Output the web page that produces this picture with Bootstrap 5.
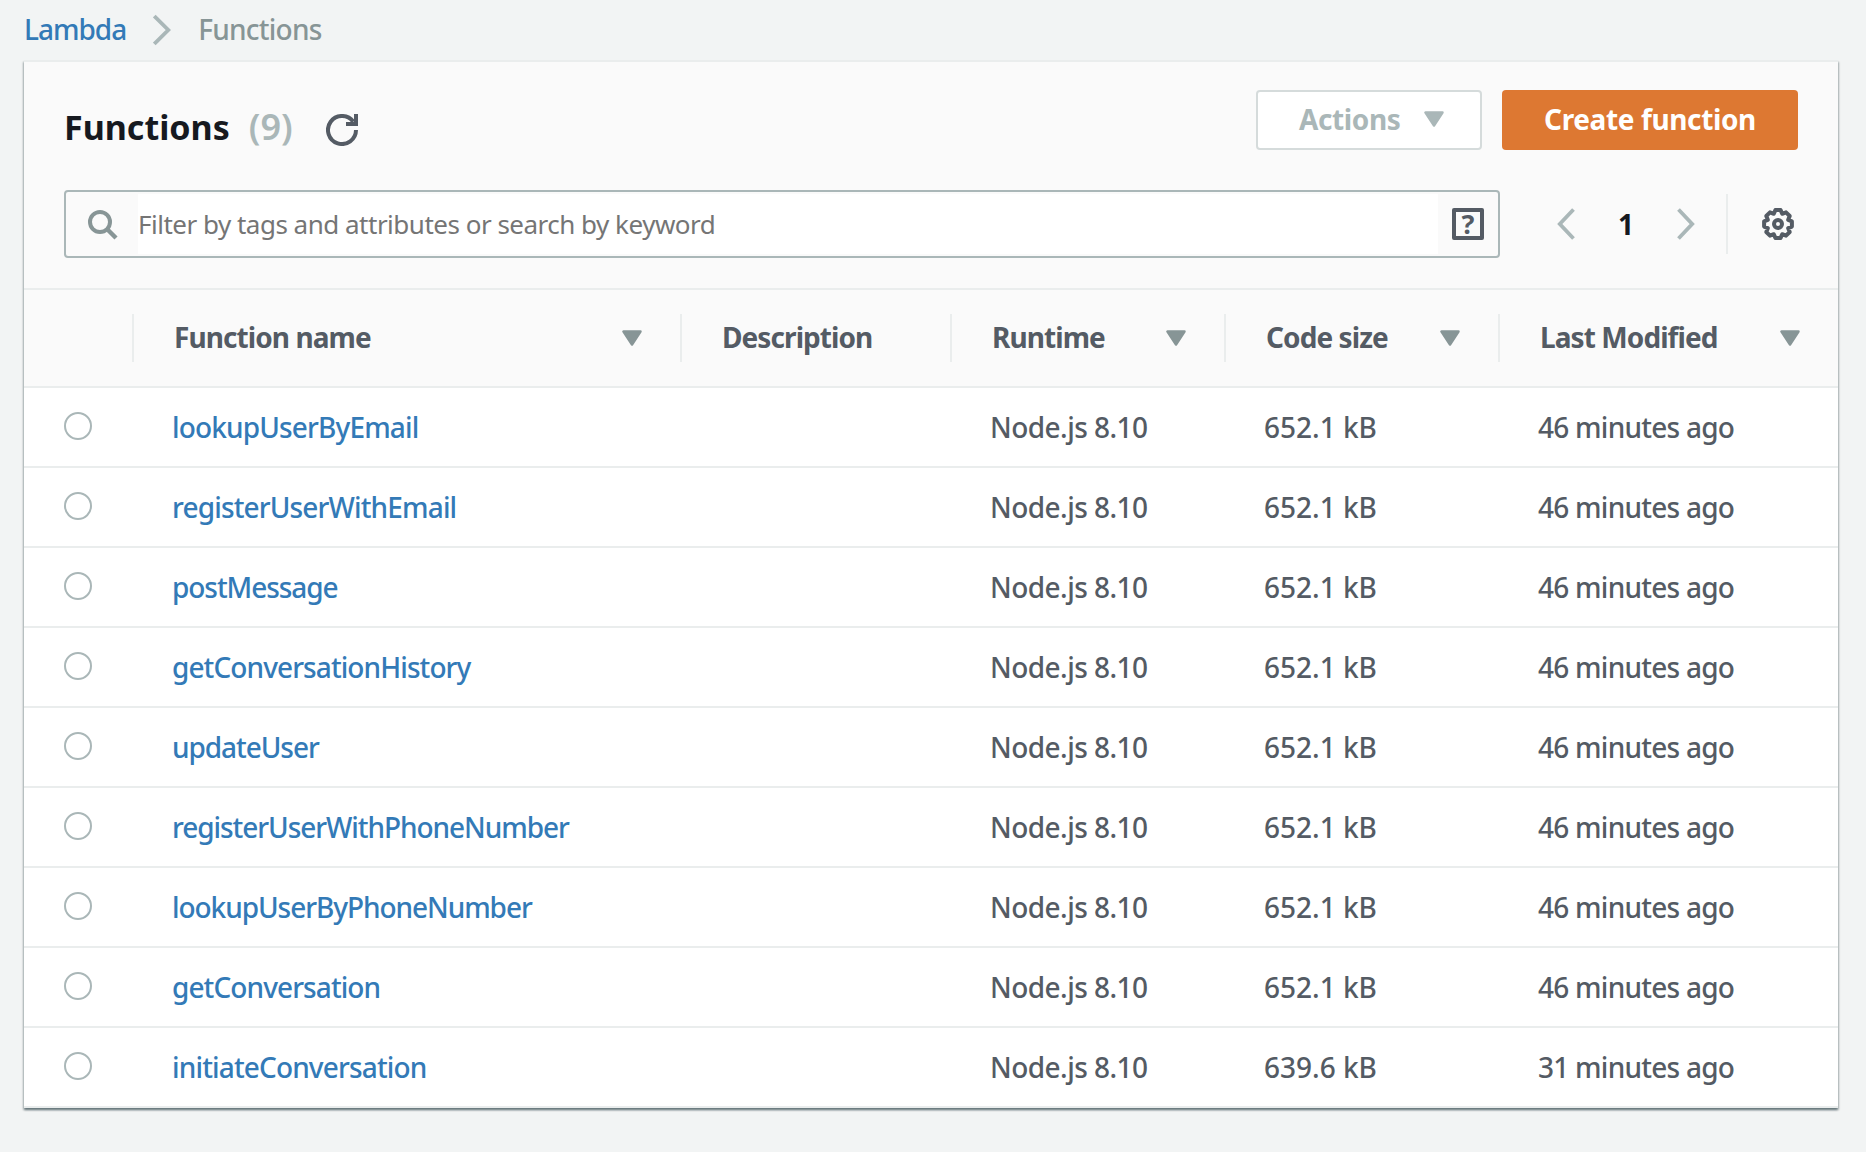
<!DOCTYPE html>
<html lang="en">
<head>
<meta charset="utf-8">
<meta name="viewport" content="width=device-width, initial-scale=1">
<title>Lambda Functions</title>
<link href="https://cdn.jsdelivr.net/npm/bootstrap@5.3.0/dist/css/bootstrap.min.css" rel="stylesheet">
<style>
  body { background: #f2f4f4; font-family: "Noto Sans", "Open Sans", sans-serif; font-size: 28px; font-weight: 500; color: #545b64; line-height: 1.4; }
  a { color: #337ab7; text-decoration: none; }
  svg { display: block; flex: none; }

  .crumbs { height: 60px; padding: 0 24px; color: #879596; }
  .crumb-home { letter-spacing: -1px; }
  .crumb-here { letter-spacing: -.76px; }
  .crumb-sep { margin: 0 27px 0 27px; }

  .panel { width: 1814px; margin-left: 24px; background: #fff; border-top: 2px solid #eaeded;
    box-shadow: 0 2px 2px 0 rgba(0,28,36,.35), 1px 2px 2px 0 rgba(0,28,36,.2), -1px 2px 2px 0 rgba(0,28,36,.2); }
  .panel-head { background: #fafafa; padding: 28px 40px 30px; border-bottom: 2px solid #eaeded; }
  .panel-title { font-size: 34px; font-weight: 700; color: #16191f; letter-spacing: 0; margin: 0; line-height: 60px; }
  .title-row { padding-top: 13px; height: 60px; }
  .title-count { font-size: 36px; font-weight: 600; color: #aab7b8; margin-left: 19px; line-height: 60px; }
  .reload { margin: 7px 0 0 33px; }

  .btn-act, .btn-make { height: 60px; border-radius: 4px; font-size: 28px; font-weight: 700; line-height: 1; padding: 0; padding-bottom: 2px; }
  .btn-act { width: 226px; background: #fff; border: 2px solid #d5dbdb; color: #aab7b8; letter-spacing: -.38px; padding-left: 41px; padding-right: 36px; }
  .btn-make { width: 296px; background: #dd7832; border: 0; color: #fff; letter-spacing: -.38px; }
  .btn-make:hover { background: #c9671f; color: #fff; }

  .tools { margin-top: 40px; height: 68px; }
  .search { width: 1436px; height: 68px; border: 2px solid #aab7b8; border-radius: 4px; padding: 2px 0; }
  .search-icon { margin: 1px 20px 0 22px; }
  .search-field { width: 1300px; height: 60px; background: #fff; border: 0; border-radius: 0; padding: 0; font-size: 26px; letter-spacing: -.5px; font-weight: 400; }
  .search-field::placeholder { color: #757575; opacity: 1; }
  .help-box { width: 32px; height: 32px; border: 4px solid #545b64; border-radius: 2px; margin-left: 14px; font-weight: 700; font-size: 27px; line-height: 24px; }
  .pager { margin-left: 57px; }
  .page-now { width: 102px; color: #16191f; font-weight: 700; line-height: 40px; }
  .pager-rule { width: 2px; height: 60px; background: #eaeded; margin: 0 34px 0 31px; }

  .fn-table { table-layout: fixed; border-collapse: separate; border-spacing: 0; margin: 0; color: #545b64; }
  .fn-table > thead > tr > th { background: #fafafa; padding: 24px 0; border-bottom: 2px solid #eaeded; font-weight: 700; }
  .fn-table > tbody > tr > td { background: #fff; height: 80px; padding: 0 0 0 38px; border-bottom: 2px solid #eaeded; color: #545b64; vertical-align: middle; line-height: 78px; white-space: nowrap; }
  .fn-table > tbody > tr > td:first-child { padding-left: 40px; }
  .th-in { height: 48px; padding: 0 38px 0 40px; border-right: 2px solid #eaeded; letter-spacing: -.92px; white-space: nowrap; }
  th:last-child .th-in { border-right: 0; }
  .pick { width: 28px; height: 28px; margin: 0 0 2px; display: block; border: 2px solid #aab7b8; border-radius: 50%; appearance: none; background: #fff; }
  .t-run { letter-spacing: -.55px; }
  .t-when { letter-spacing: -.75px; }
  .t-loose { letter-spacing: -.85px; }
  .t-mid { letter-spacing: -.91px; }
  .t-tight { letter-spacing: -1.06px; }
</style>
<script src="https://cdn.jsdelivr.net/npm/bootstrap@5.3.0/dist/js/bootstrap.bundle.min.js"></script>
</head>
<body class="min-vh-100">
<svg width="0" height="0" class="position-absolute" aria-hidden="true">
  <symbol id="caret" viewBox="0 0 20 16"><path d="M1.5 1.5h17L10 14.5z" fill="currentColor" stroke="currentColor" stroke-width="2.5" stroke-linejoin="round"/></symbol>
</svg>

<nav class="crumbs d-flex align-items-center" aria-label="breadcrumb">
  <a href="#" class="crumb-home">Lambda</a>
  <svg class="crumb-sep" width="18" height="32" viewBox="0 0 18 32" fill="none" stroke="#aab7b8" stroke-width="3.8"><path d="M1.3 2 15.3 16 1.3 30"/></svg>
  <span class="crumb-here">Functions</span>
</nav>

<main class="panel">
  <header class="panel-head">
    <div class="d-flex justify-content-between">
      <div class="title-row d-flex align-items-center">
        <h1 class="panel-title">Functions</h1>
        <span class="title-count">(9)</span>
        <svg class="reload" width="32" height="32" viewBox="0 0 32 32" fill="none" stroke="#545b64" stroke-width="4"><path d="M30 16A14 14 0 1 1 27.3 7.7"/><path d="M30 0V10H20"/></svg>
      </div>
      <div class="d-flex" style="gap:20px">
        <button type="button" class="btn btn-act d-flex align-items-center justify-content-between">Actions <svg width="20" height="16"><use href="#caret"/></svg></button>
        <button type="button" class="btn btn-make">Create function</button>
      </div>
    </div>
    <div class="tools d-flex align-items-center">
      <div class="search d-flex align-items-center">
        <svg class="search-icon" width="30" height="30" viewBox="0 0 30 30" fill="none" stroke="#879596" stroke-width="4"><circle cx="12" cy="12" r="10"/><path d="M19 19 28 28" stroke-width="4.4"/></svg>
        <input type="text" class="form-control search-field" placeholder="Filter by tags and attributes or search by keyword">
        <span class="help-box d-flex justify-content-center align-items-center">?</span>
      </div>
      <div class="pager d-flex align-items-center">
        <svg width="18" height="32" viewBox="0 0 18 32" fill="none" stroke="#aab7b8" stroke-width="3.8"><path d="M16.5 1.5 2.8 16 16.5 30.5"/></svg>
        <span class="page-now text-center">1</span>
        <svg width="18" height="32" viewBox="0 0 18 32" fill="none" stroke="#aab7b8" stroke-width="3.8"><path d="M1.5 1.5 15.2 16 1.5 30.5"/></svg>
      </div>
      <span class="pager-rule"></span>
      <svg width="32" height="32" viewBox="-16 -16 32 32" fill="none" stroke="#545b64" stroke-linejoin="round">
        <path stroke-width="4" d="M13.9 2.6 10.2 4.2 11.7 8 8 11.7 4.2 10.2 2.6 13.9H-2.6L-4.2 10.2-8 11.7-11.7 8-10.2 4.2-13.9 2.6V-2.6L-10.2-4.2-11.7-8-8-11.7-4.2-10.2-2.6-13.9H2.6L4.2-10.2 8-11.7 11.7-8 10.2-4.2 13.9-2.6z"/>
        <circle r="4" stroke-width="4"/>
      </svg>
    </div>
  </header>

  <table class="table fn-table">
    <colgroup><col style="width:110px"><col style="width:548px"><col style="width:270px"><col style="width:274px"><col style="width:274px"><col style="width:338px"></colgroup>
    <thead>
      <tr>
        <th><div class="th-in"></div></th>
        <th><div class="th-in d-flex align-items-center justify-content-between">Function name <svg width="20" height="16" color="#879596"><use href="#caret"/></svg></div></th>
        <th><div class="th-in d-flex align-items-center">Description</div></th>
        <th><div class="th-in d-flex align-items-center justify-content-between">Runtime <svg width="20" height="16" color="#879596"><use href="#caret"/></svg></div></th>
        <th><div class="th-in d-flex align-items-center justify-content-between">Code size <svg width="20" height="16" color="#879596"><use href="#caret"/></svg></div></th>
        <th><div class="th-in d-flex align-items-center justify-content-between">Last Modified <svg width="20" height="16" color="#879596"><use href="#caret"/></svg></div></th>
      </tr>
    </thead>
    <tbody>
      <tr><td><input type="radio" name="fn" class="pick"></td><td><a href="#" class="t-loose">lookupUserByEmail</a></td><td></td><td class="t-run">Node.js 8.10</td><td>652.1 kB</td><td class="t-when">46 minutes ago</td></tr>
      <tr><td><input type="radio" name="fn" class="pick"></td><td><a href="#" class="t-loose">registerUserWithEmail</a></td><td></td><td class="t-run">Node.js 8.10</td><td>652.1 kB</td><td class="t-when">46 minutes ago</td></tr>
      <tr><td><input type="radio" name="fn" class="pick"></td><td><a href="#" class="t-tight">postMessage</a></td><td></td><td class="t-run">Node.js 8.10</td><td>652.1 kB</td><td class="t-when">46 minutes ago</td></tr>
      <tr><td><input type="radio" name="fn" class="pick"></td><td><a href="#" class="t-mid">getConversationHistory</a></td><td></td><td class="t-run">Node.js 8.10</td><td>652.1 kB</td><td class="t-when">46 minutes ago</td></tr>
      <tr><td><input type="radio" name="fn" class="pick"></td><td><a href="#" class="t-tight">updateUser</a></td><td></td><td class="t-run">Node.js 8.10</td><td>652.1 kB</td><td class="t-when">46 minutes ago</td></tr>
      <tr><td><input type="radio" name="fn" class="pick"></td><td><a href="#" class="t-tight">registerUserWithPhoneNumber</a></td><td></td><td class="t-run">Node.js 8.10</td><td>652.1 kB</td><td class="t-when">46 minutes ago</td></tr>
      <tr><td><input type="radio" name="fn" class="pick"></td><td><a href="#" class="t-tight">lookupUserByPhoneNumber</a></td><td></td><td class="t-run">Node.js 8.10</td><td>652.1 kB</td><td class="t-when">46 minutes ago</td></tr>
      <tr><td><input type="radio" name="fn" class="pick"></td><td><a href="#" class="t-mid">getConversation</a></td><td></td><td class="t-run">Node.js 8.10</td><td>652.1 kB</td><td class="t-when">46 minutes ago</td></tr>
      <tr><td><input type="radio" name="fn" class="pick"></td><td><a href="#" class="t-loose">initiateConversation</a></td><td></td><td class="t-run">Node.js 8.10</td><td>639.6 kB</td><td class="t-when">31 minutes ago</td></tr>
    </tbody>
  </table>
</main>
</body>
</html>
